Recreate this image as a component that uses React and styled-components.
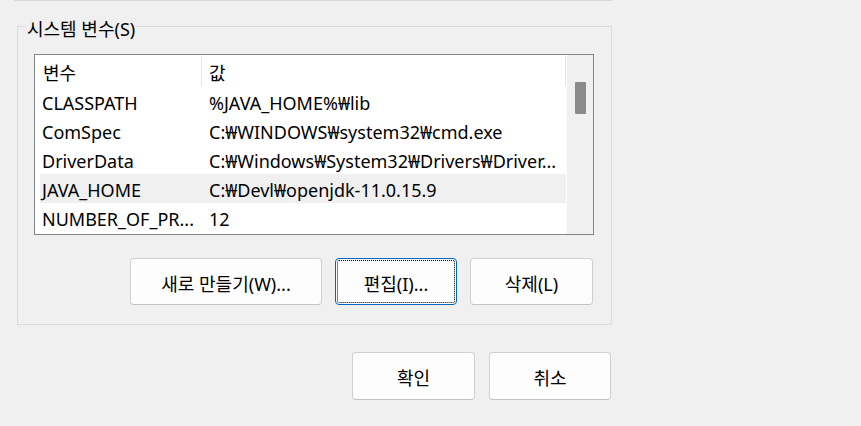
import React from 'react';
import styled, { createGlobalStyle } from 'styled-components';

const GlobalStyle = createGlobalStyle`
  html, body {
    margin: 0;
    padding: 0;
    background: #f0f0f0;
  }
  body {
    font-family: "Noto Sans", "Noto Sans CJK KR", sans-serif;
    font-size: 18px;
    color: #000;
  }
`;

const variables = [
  { name: 'CLASSPATH', value: '%JAVA_HOME%₩lib' },
  { name: 'ComSpec', value: 'C:₩WINDOWS₩system32₩cmd.exe' },
  { name: 'DriverData', value: 'C:₩Windows₩System32₩Drivers₩Driver...' },
  { name: 'JAVA_HOME', value: 'C:₩Devl₩openjdk-11.0.15.9', selected: true },
  { name: 'NUMBER_OF_PR...', value: '12' },
];

const App = () => (
  <Page>
    <GlobalStyle />
    <TopRule />
    <Group>
      <Legend>시스템 변수(S)</Legend>
      <ListBox>
        <Table>
          <HeaderRow>
            <HeaderCell>변수</HeaderCell>
            <Divider />
            <HeaderCell $value>값</HeaderCell>
            <Divider />
          </HeaderRow>
          {variables.map((v) => (
            <Row key={v.name} $selected={v.selected}>
              <Cell>{v.name}</Cell>
              <Cell>{v.value}</Cell>
            </Row>
          ))}
        </Table>
        <Scrollbar>
          <Thumb />
        </Scrollbar>
      </ListBox>
      <ButtonRow>
        <Button $width={192}>새로 만들기(W)...</Button>
        <Button $width={122} $focused>편집(I)...</Button>
        <Button $width={123}>삭제(L)</Button>
      </ButtonRow>
    </Group>
    <DialogButtons>
      <Button $width={123} $height={48}>확인</Button>
      <Button $width={122} $height={48}>취소</Button>
    </DialogButtons>
  </Page>
);

const Page = styled.div`
  width: 861px;
  height: 426px;
  overflow: hidden;
`;

const TopRule = styled.div`
  margin-left: 14px;
  width: 598px;
  height: 0;
  border-top: 1px solid #d9d9d9;
`;

const Group = styled.fieldset`
  box-sizing: border-box;
  width: 595px;
  margin: 10px 0 0 17px;
  padding: 0 17px 19px 16px;
  border: 1px solid #dcdcdc;
  min-width: 0;
`;

const Legend = styled.legend`
  margin-left: -8px;
  padding: 6px 1px 0;
  line-height: 24px;
  font-size: 18px;
`;

const ListBox = styled.div`
  box-sizing: border-box;
  margin-top: 13px;
  width: 560px;
  height: 181px;
  border: 1px solid #82868c;
  background: #fff;
  display: flex;
`;

const Table = styled.div`
  flex: 1;
  padding-left: 5px;
  padding-right: 1px;
`;

const HeaderRow = styled.div`
  height: 32px;
  display: grid;
  grid-template-columns: 161px 1px 1fr 1px;
  align-items: center;
`;

const HeaderCell = styled.div`
  box-sizing: border-box;
  height: 32px;
  padding: 4px 0 0 ${(p) => (p.$value ? '7px' : '3px')};
  line-height: 28px;
  white-space: nowrap;
`;

const Divider = styled.div`
  height: 30px;
  background: #e5e5e5;
`;

const Row = styled.div`
  height: 29px;
  display: grid;
  grid-template-columns: 169px 1fr;
  background: ${(p) => (p.$selected ? '#f0f0f0' : 'transparent')};
`;

const Cell = styled.div`
  box-sizing: border-box;
  height: 29px;
  padding: 4px 0 0 2px;
  line-height: 25px;
  white-space: nowrap;
  overflow: hidden;

  & + & {
    padding-left: 0;
  }
`;

const Scrollbar = styled.div`
  width: 26px;
  background: #f0f0f0;
  display: flex;
  justify-content: center;
  padding-top: 27px;
  box-sizing: border-box;
`;

const Thumb = styled.div`
  width: 11px;
  height: 32px;
  background: #8a8a8a;
  border-radius: 1px;
`;

const ButtonRow = styled.div`
  display: flex;
  justify-content: flex-end;
  gap: 13px;
  margin-top: 23px;
  padding-right: 1px;
`;

const Button = styled.button`
  box-sizing: border-box;
  width: ${(p) => p.$width}px;
  height: ${(p) => p.$height || 47}px;
  padding: 2px 0 0;
  background: #fdfdfd;
  border: 1px solid ${(p) => (p.$focused ? '#0067c0' : '#d0d0d0')};
  border-bottom-color: ${(p) => (p.$focused ? '#0067c0' : '#c2c2c2')};
  border-radius: 4px;
  font-family: "Noto Sans", "Noto Sans CJK KR", sans-serif;
  font-size: 18px;
  color: #000;
  outline: ${(p) => (p.$focused ? '1px dotted #000' : 'none')};
  outline-offset: -3px;
`;

const DialogButtons = styled.div`
  display: flex;
  justify-content: flex-end;
  gap: 14px;
  width: 611px;
  margin-top: 27px;
`;

export default App;
